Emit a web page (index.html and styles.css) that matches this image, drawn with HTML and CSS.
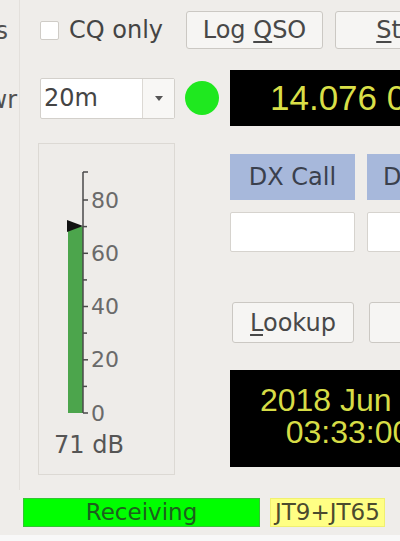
FILE: index.html
```html
<!DOCTYPE html>
<html>
<head>
<meta charset="utf-8">
<link rel="stylesheet" href="styles.css">
</head>
<body>

<div class="window">
    <div class="side">
        <div class="side-label menus"><span>Menus</span></div>
        <div class="side-label pwr"><span>Pwr</span></div>
    </div>

    <div class="main">
        <div class="row-top">
            <label class="cq"><span class="check"></span>CQ only</label>
            <button class="btn">Log <u>Q</u>SO</button>
            <button class="btn"><u>S</u>top</button>
        </div>

        <div class="row-band">
            <div class="combo">
                <div class="combo-value">20m</div>
                <div class="combo-arrow"><span class="arrow"></span></div>
            </div>
            <div class="led"></div>
            <div class="freq">14.076 000</div>
        </div>

        <div class="row-body">
            <div class="meter">
                <svg class="scale" width="135" height="290" viewBox="0 0 135 290">
                    <rect x="29" y="82.6" width="15" height="186.4" fill="#4ca54c"/>
                    <polygon points="28,76 44,82 28,88" fill="#111"/>
                    <g stroke="#4a4a4a" stroke-width="1.5">
                        <line x1="44" y1="28" x2="44" y2="269"/>
                        <line x1="44" y1="28" x2="49" y2="28"/>
                        <line x1="44" y1="269" x2="49" y2="269"/>
                        <line x1="44" y1="242.4" x2="48" y2="242.4"/>
                        <line x1="44" y1="215.8" x2="49" y2="215.8"/>
                        <line x1="44" y1="189.1" x2="48" y2="189.1"/>
                        <line x1="44" y1="162.5" x2="49" y2="162.5"/>
                        <line x1="44" y1="135.9" x2="48" y2="135.9"/>
                        <line x1="44" y1="109.3" x2="49" y2="109.3"/>
                        <line x1="44" y1="82.6" x2="48" y2="82.6"/>
                        <line x1="44" y1="56" x2="49" y2="56"/>
                    </g>
                    <g class="ticks">
                        <text x="52" y="269">0</text>
                        <text x="52" y="215.8">20</text>
                        <text x="52" y="162.5">40</text>
                        <text x="52" y="109.3">60</text>
                        <text x="52" y="56">80</text>
                    </g>
                </svg>
                <div class="meter-value">71 dB</div>
            </div>

            <div class="dx">
                <div class="hdr">DX Call</div>
                <div class="hdr">DX Grid</div>
                <div class="field"></div>
                <div class="field"></div>
                <button class="btn lookup"><u>L</u>ookup</button>
                <button class="btn lookup">Add</button>
                <div class="clock">
                    <div>2018 Jun 03</div>
                    <div>03:33:00</div>
                </div>
            </div>
        </div>
    </div>
</div>

<div class="status">
    <div class="state-rx">Receiving</div>
    <div class="mode">JT9+JT65</div>
</div>
<div class="bottom-edge"></div>

</body>
</html>
```

FILE: styles.css
```css
body {
    margin: 0;
    width: 400px;
    height: 541px;
    overflow: hidden;
    background: #efedea;
    font-family: "DejaVu Sans", sans-serif;
    font-size: 24px;
    color: #444;
}

.window { display: flex; height: 490px; }

/* clipped labels of the panel on the left */
.side { width: 19px; flex: none; overflow: hidden; border-right: 1px solid #e3e0dc; }
.side-label { display: flex; justify-content: flex-end; white-space: nowrap; height: 22px; line-height: 22px; color: #505050; }
.side-label.menus { margin-top: 20px; padding-right: 11px; }
.side-label.pwr { margin-top: 47px; padding-right: 2px; }

.main { flex: 1; min-width: 0; padding-left: 18px; }

.btn {
    flex: none;
    box-sizing: border-box;
    width: 137px;
    height: 38px;
    padding: 0;
    border: 1px solid #cbc8c3;
    border-radius: 3px;
    background: #f6f5f3;
    font: inherit;
    color: #484848;
}
.btn u { text-underline-offset: 3px; }

.row-top { display: flex; align-items: center; height: 40px; margin-top: 10px; padding-left: 2px; }
.row-top .btn + .btn { margin-left: 12px; }
.cq { flex: none; width: 146px; display: flex; align-items: center; white-space: nowrap; }
.check { width: 17px; height: 17px; margin-right: 10px; background: #fff; border: 1px solid #cfccc7; border-radius: 2px; }

.row-band { display: flex; align-items: center; height: 56px; margin-top: 20px; padding-left: 2px; }
.combo { flex: none; display: flex; box-sizing: border-box; width: 135px; height: 41px; background: #fff; border: 1px solid #d3d0cb; border-radius: 2px; }
.combo-value { flex: 1; padding-left: 3px; line-height: 39px; }
.combo-arrow { width: 31px; display: flex; align-items: center; justify-content: center; border-left: 1px solid #dcd9d4; background: #f8f7f5; }
.arrow { width: 0; height: 0; border-left: 4px solid transparent; border-right: 4px solid transparent; border-top: 5px solid #555; }
.led { flex: none; width: 34px; height: 34px; margin-left: 10px; border-radius: 50%; background: #1fe81f; }
.freq {
    flex: none;
    width: 215px;
    height: 56px;
    margin-left: 11px;
    padding-left: 40px;
    background: #000;
    color: #d9df48;
    font-family: "Liberation Sans", sans-serif;
    font-size: 35px;
    line-height: 56px;
    white-space: nowrap;
}

.row-body { display: flex; margin-top: 17px; }

.meter { flex: none; box-sizing: border-box; width: 137px; height: 332px; border: 1px solid #dcd9d4; background: #eeece9; }
.scale { display: block; }
.ticks text { font-family: "DejaVu Sans", sans-serif; font-size: 22px; fill: #6a6a6a; dominant-baseline: central; }
.meter-value { padding-left: 15px; line-height: 22px; color: #555; }

.dx { display: grid; grid-template-columns: 125px 125px; column-gap: 12px; align-content: start; margin-left: 55px; padding-top: 11px; }
.hdr { height: 46px; display: flex; align-items: center; justify-content: center; background: #a7b8db; color: #3a404d; white-space: nowrap; }
.field { box-sizing: border-box; height: 40px; margin-top: 12px; background: #fff; border: 1px solid #d6d3ce; border-radius: 2px; }
.btn.lookup { width: 122px; height: 41px; margin-top: 50px; margin-left: 2px; }
.clock {
    grid-column: 1 / -1;
    box-sizing: border-box;
    width: 236px;
    height: 97px;
    margin-top: 27px;
    padding-top: 14px;
    background: #000;
    color: #d6dc46;
    font-family: "Liberation Sans", sans-serif;
    font-size: 32px;
    line-height: 32px;
    text-align: center;
    white-space: nowrap;
}

/* status bar */
.status { display: flex; height: 29px; margin-top: 8px; padding-left: 23px; line-height: 27px; font-size: 23px; }
.state-rx { box-sizing: border-box; width: 237px; text-align: center; background: #00ff00; border: 1px solid #33c433; color: #1d5f1d; }
.mode { margin-left: 10px; padding: 0 4px; background: #ffff84; color: #4b4b2e; border: 1px solid #f0f070; }
.bottom-edge { height: 6px; margin-top: 8px; background: #f8f8f8; }
```
